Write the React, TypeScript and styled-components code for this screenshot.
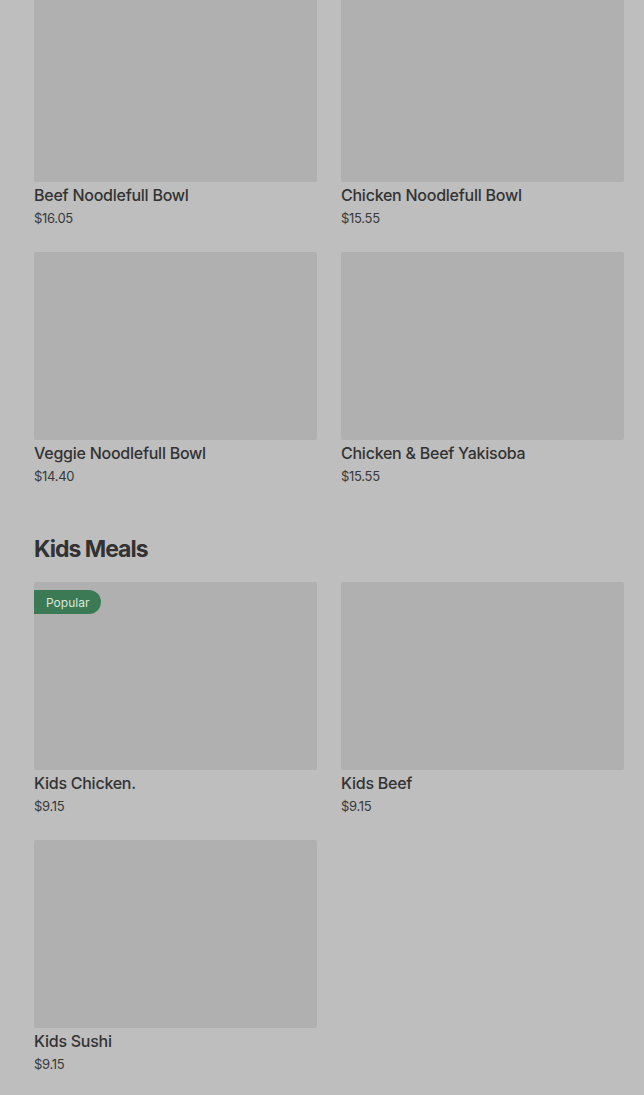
import React from "react";
import styled, { createGlobalStyle } from "styled-components";

const Global = createGlobalStyle`
  html, body { margin: 0; padding: 0; background: #bebebe; }
  body { font-family: Inter, "Noto Sans", "Liberation Sans", sans-serif; color: #333333; }
`;

const Page = styled.main`
  padding: 0 20px 21px 34px;
  margin-top: -6px;
  display: flex;
  flex-direction: column;
`;

const Section = styled.section`
  display: flex;
  flex-direction: column;
  & + & { margin-top: 49px; }
`;

const Heading = styled.h2`
  margin: 0 0 20px;
  font-size: 23px;
  line-height: 26px;
  font-weight: 700;
  letter-spacing: -1px;
  color: #323232;
`;

const Grid = styled.div`
  display: grid;
  grid-template-columns: 283px 283px;
  column-gap: 24px;
  row-gap: 23px;
`;

const Card = styled.article`
  display: flex;
  flex-direction: column;
`;

const Thumb = styled.div`
  position: relative;
  height: 188px;
  background: #b0b0b0;
  border-radius: 2px;
`;

const Badge = styled.span`
  position: absolute;
  top: 8px;
  left: 0;
  height: 24px;
  padding: 0 12px;
  display: flex;
  align-items: center;
  background: #3c7a55;
  color: #d9e6dd;
  font-size: 12px;
  border-radius: 0 12px 12px 0;
`;

const Title = styled.div`
  margin-top: 2px;
  font-size: 16px;
  line-height: 22px;
  font-weight: 500;
  letter-spacing: -0.25px;
  color: #333333;
`;

const Price = styled.div`
  padding-top: 1px;
  font-size: 13px;
  line-height: 22px;
  letter-spacing: -0.3px;
  color: #3a3a3a;
`;

type Item = { name: string; price: string; popular?: boolean };

const noodles: Item[] = [
  { name: "Beef Noodlefull Bowl", price: "$16.05" },
  { name: "Chicken Noodlefull Bowl", price: "$15.55" },
  { name: "Veggie Noodlefull Bowl", price: "$14.40" },
  { name: "Chicken & Beef Yakisoba", price: "$15.55" },
];

const kids: Item[] = [
  { name: "Kids Chicken.", price: "$9.15", popular: true },
  { name: "Kids Beef", price: "$9.15" },
  { name: "Kids Sushi", price: "$9.15" },
];

const ItemCard = ({ item }: { item: Item }) => (
  <Card>
    <Thumb>{item.popular && <Badge>Popular</Badge>}</Thumb>
    <Title>{item.name}</Title>
    <Price>{item.price}</Price>
  </Card>
);

export default function App() {
  return (
    <>
      <Global />
      <Page>
        <Section>
          <Grid>
            {noodles.map((i) => (
              <ItemCard key={i.name} item={i} />
            ))}
          </Grid>
        </Section>
        <Section>
          <Heading>Kids Meals</Heading>
          <Grid>
            {kids.map((i) => (
              <ItemCard key={i.name} item={i} />
            ))}
          </Grid>
        </Section>
      </Page>
    </>
  );
}
